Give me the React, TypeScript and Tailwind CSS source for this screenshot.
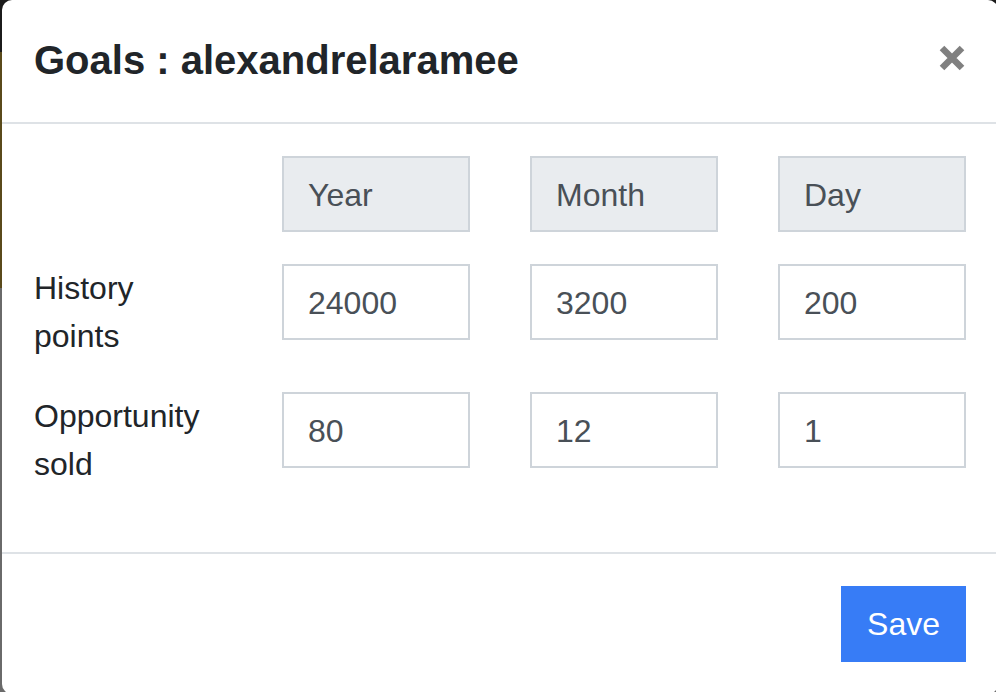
import type { ReactNode } from 'react';

const columns = ['Year', 'Month', 'Day'];

const goals = [
    { label: 'History points', values: ['24000', '3200', '200'] },
    { label: 'Opportunity sold', values: ['80', '12', '1'] },
];

function HeadCell({ children }: { children: ReactNode }) {
    return (
        <div className="border-2 border-[#ced4da] bg-[#e9ecef] px-[24px] pt-[13px] pb-[11px] text-[32px] leading-[48px] text-[#495057]">
            {children}
        </div>
    );
}

export default function App() {
    return (
        <div className="flex w-[996px] h-[692px] overflow-hidden bg-[linear-gradient(to_bottom,#1b1b1b_0px,#1b1b1b_52px,#5a4a1b_52px,#5a4a1b_288px,#6a6a6a_288px)] font-['Liberation_Sans',Arial,sans-serif]">
            <div className="ml-[2px] w-[996px] shrink-0 self-start flex flex-col bg-white rounded-[10px]">
                {/* Header */}
                <div className="flex items-center justify-between p-[32px] border-b-2 border-[#dee2e6]">
                    <h5 className="text-[40px] leading-[57.6px] font-bold text-[#212529]">Goals : alexandrelaramee</h5>
                    <button className="w-[30px] h-[30px] flex items-center justify-center" aria-label="Close">
                        <svg width="30" height="30" viewBox="0 0 30 30" overflow="visible">
                            <path d="M6 2 L26 22 M26 2 L6 22" stroke="#808080" strokeWidth="6.5" strokeLinecap="butt" />
                        </svg>
                    </button>
                </div>

                {/* Body */}
                <div className="pt-[32px] px-[32px] pb-[64px]">
                    <div className="grid grid-cols-4 gap-x-[60px] gap-y-[32px] items-start">
                        <div />
                        {columns.map(c => (
                            <HeadCell key={c}>{c}</HeadCell>
                        ))}
                        {goals.map(g => (
                            <>
                                <div key={g.label} className="text-[32px] leading-[48px] text-[#212529]">{g.label}</div>
                                {g.values.map((v, i) => (
                                    <input
                                        key={g.label + i}
                                        type="text"
                                        defaultValue={v}
                                        className="w-full min-w-0 border-2 border-[#ced4da] bg-white px-[24px] pt-[13px] pb-[11px] text-[32px] leading-[48px] text-[#495057] outline-none"
                                    />
                                ))}
                            </>
                        ))}
                    </div>
                </div>

                {/* Footer */}
                <div className="flex justify-end p-[32px] border-t-2 border-[#dee2e6]">
                    <button className="bg-[#377cf6] border-2 border-[#377cf6] text-white px-[24px] py-[12px] text-[32px] leading-[48px]">
                        Save
                    </button>
                </div>
            </div>
        </div>
    );
}
